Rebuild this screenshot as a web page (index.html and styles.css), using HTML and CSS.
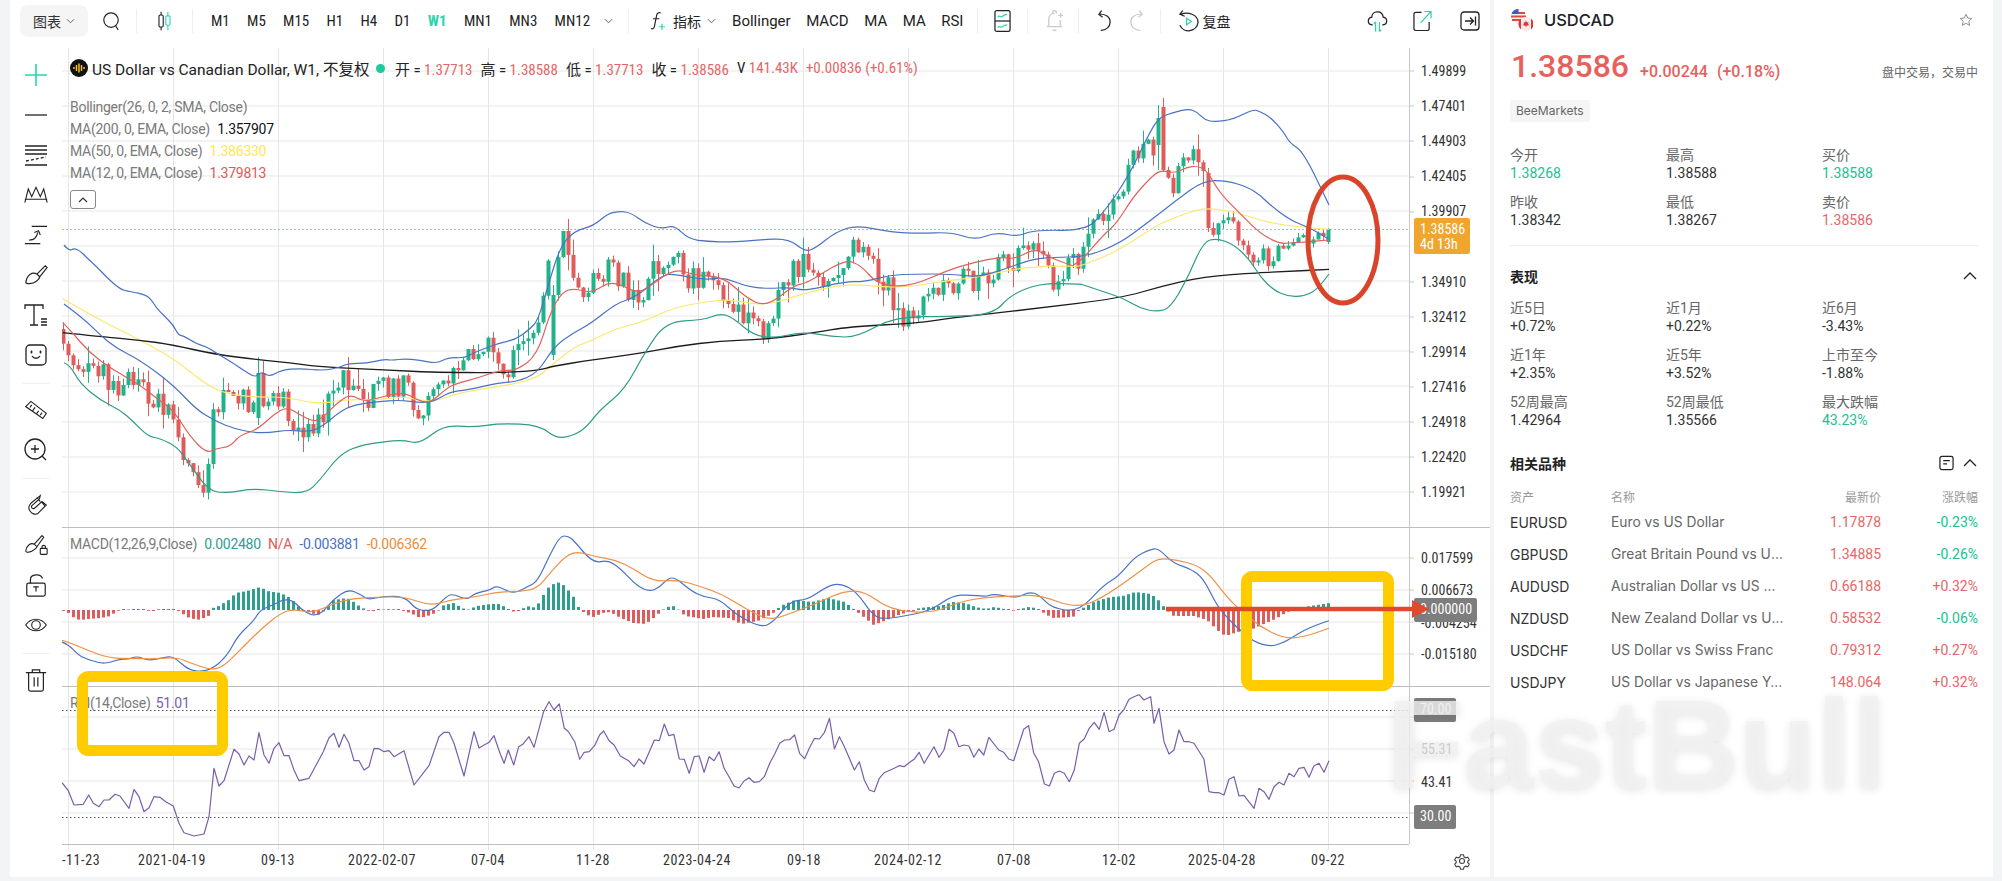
FILE: index.html
```html
<!DOCTYPE html>
<html lang="zh-CN">
<head>
<meta charset="utf-8">
<title>USDCAD</title>
<link rel="stylesheet" href="styles.css">
</head>
<body>
<div class="app">
  <main class="workspace">
    <header class="topbar">
      <button class="menu-btn">图表 <svg class="chev" viewBox="0 0 10 6"><path d="M1 1l4 4 4-4"/></svg></button>
      <svg class="ic ic-search" viewBox="0 0 20 22"><circle cx="10" cy="10" r="8"/><path d="M15 16l3 5"/></svg>
      <i class="sep sep-a"></i>
      <svg class="ic ic-candle" viewBox="0 0 20 24"><path d="M6 1v4M6 19v4"/><rect x="3.5" y="5" width="5" height="14" rx="1.5"/><path class="teal" d="M14 1v5M14 17v6"/><rect class="teal" x="11.5" y="6" width="5" height="11" rx="1.5"/></svg>
      <i class="sep sep-b"></i>
      <nav class="periods">
        <span>M1</span><span>M5</span><span>M15</span><span>H1</span><span>H4</span><span>D1</span><span class="on">W1</span><span>MN1</span><span>MN3</span><span>MN12</span>
      </nav>
      <svg class="chev chev-p" viewBox="0 0 10 6"><path d="M1 1l4 4 4-4"/></svg>
      <i class="sep sep-c"></i>
      <svg class="ic ic-f" viewBox="0 0 18 24"><path d="M12 3c-2.500-1-4 0-4.500 2.500L5 18c-.5 2.500-2 3.500-4 2.500M3.500 9.500h7"/><path class="teal" d="M10 18.500h7M13.500 15v7"/></svg>
      <span class="tb-text tb-ind">指标</span>
      <svg class="chev chev-i" viewBox="0 0 10 6"><path d="M1 1l4 4 4-4"/></svg>
      <nav class="indicators"><span>Bollinger</span><span>MACD</span><span>MA</span><span>MA</span><span>RSI</span></nav>
      <i class="sep sep-d"></i>
      <svg class="ic ic-layout" viewBox="0 0 18 24"><rect x="1" y="1" width="16" height="22" rx="2"/><path d="M1 12h16"/><path class="teal" d="M4 8c2-3 3 1 5-1s3-2 5-2M4 19c2-3 3 1 5-1s3-2 5-2"/></svg>
      <i class="sep sep-e"></i>
      <svg class="ic ic-bell muted" viewBox="0 0 20 24"><path d="M4 18V10c0-3.500 2.500-6 6-6M2 18h16M8 21c1 1.500 3 1.500 4 0M8 4c0-2 1-3 2-3s2 1 2 3M16 18v-7M14 6h5M16.500 3.500v5"/></svg>
      <i class="sep sep-f"></i>
      <svg class="ic ic-undo" viewBox="0 0 16 24"><path d="M5 1L2 5l4 3M2 5c6-1 12 2 12 8 0 5-4 9-10 9"/></svg>
      <svg class="ic ic-redo muted" viewBox="0 0 16 24"><path d="M11 1l3 4-4 3M14 5C8 4 2 7 2 13c0 5 4 9 10 9"/></svg>
      <i class="sep sep-g"></i>
      <svg class="ic ic-replay" viewBox="0 0 22 24"><path d="M5 1L2 5l5 2M3 5c7-3 18 0 18 8.500a10 10 0 0 1-19 3"/><path class="teal" d="M9 9l5 3.500-5 3.500z"/></svg>
      <span class="tb-text tb-replay">复盘</span>
      <span class="grow"></span>
      <svg class="ic ic-cloud" viewBox="0 0 22 24"><path d="M6 16c-6 0-6-7-1-8 0-7 11-8 12 0 5 1 5 8-1 8"/><path class="teal" d="M9 13v10M9 13l-2 2M13 13v10M13 23l2-2"/></svg>
      <svg class="ic ic-share" viewBox="0 0 20 24"><path d="M9 3H3a2 2 0 0 0-2 2v15a2 2 0 0 0 2 2h12a2 2 0 0 0 2-2v-7"/><path class="teal" d="M8 14L19 2M12 2h7v7"/></svg>
      <svg class="ic ic-collapse" viewBox="0 0 20 20"><rect x="1" y="1" width="18" height="18" rx="3"/><path d="M5 10h8M10 6.500l3.500 3.500-3.500 3.500M15.500 5.500v9"/></svg>
    </header>

    <div class="stage">
      <aside class="tools">
        <svg class="tool" viewBox="0 0 24 24"><path class="teal thick" d="M12 1v22M1 12h22"/></svg>
        <svg class="tool" viewBox="0 0 24 24"><path d="M1 12h22"/></svg>
        <svg class="tool" viewBox="0 0 24 24"><path d="M1 3h22M1 7h22M1 11h22M1 22h22"/><path stroke-dasharray="3 2" d="M2 18l20-4"/></svg>
        <svg class="tool" viewBox="0 0 28 24"><path d="M1 21L5 5l4 9 5-11 5 11 4-9 4 16M1 17h26"/></svg>
        <svg class="tool" viewBox="0 0 28 24"><path d="M9 2h18M1 22h18M6 18c6 0 9-3 10-9M12 9l5-2 2 5"/></svg>
        <svg class="tool" viewBox="0 0 26 24"><path d="M14 11L23 2l2 2-8 10M14 11c-5-3-11 1-12 9 0 2 7 2 11-1 3-2 4-4 4-5z"/></svg>
        <svg class="tool" viewBox="0 0 24 24"><path d="M1 6V2h18v4M10 2v20M6 22h8M17 16h6M17 19h6M17 22h6"/></svg>
        <svg class="tool" viewBox="0 0 24 24"><rect x="2" y="2" width="20" height="20" rx="4"/><path d="M8 13c2 3 6 3 8 0"/><path class="dot" d="M7.500 8.500v1M16.500 8.500v1"/></svg>
        <i class="tool-sep"></i>
        <svg class="tool" viewBox="0 0 28 24"><path d="M8 2l18 14-4 6L2 8zM9 6l-2 3M13 9l-3 4M17 13l-2 3M21 15l-2 3"/></svg>
        <svg class="tool" viewBox="0 0 24 24"><circle cx="11" cy="11" r="10"/><path d="M18 18l4 4M11 7v8M7 11h8"/></svg>
        <i class="tool-sep"></i>
        <svg class="tool" viewBox="0 0 28 26"><path d="M19 2L8 11c-3 3-3 6-1 9s6 5 9 3l10-10-5-4-9 8c-2 1-4-1-3-3l9-8zM15 4l4 5M21 10l4 5"/></svg>
        <svg class="tool" viewBox="0 0 28 26"><path d="M12 12l9-10 2 2-8 11M12 12c-4-2-9 1-10 8 0 2 6 2 9-1 3-2 4-3 4-4z"/><rect x="19" y="17" width="8" height="7" rx="1"/><path d="M21 17v-2c0-2 4-2 4 0v2"/></svg>
        <svg class="tool" viewBox="0 0 24 26"><rect x="2" y="11" width="20" height="14" rx="2"/><path d="M6 11V7c0-6 11-7 13-1M9 15h6M12 15v5"/></svg>
        <svg class="tool" viewBox="0 0 28 24"><path d="M2 12c6-9 18-9 24 0-6 9-18 9-24 0z"/><circle cx="14" cy="12" r="5"/></svg>
        <i class="tool-sep"></i>
        <svg class="tool" viewBox="0 0 24 26"><path d="M1 5h22M8 5V2h8v3M4 5v18a2 2 0 0 0 2 2h12a2 2 0 0 0 2-2V5M10 10v10M14 10v10"/></svg>
      </aside>

      <section class="chart">
        <svg id="plot" class="plot" viewBox="62 48 1428 829" width="1428" height="829">
          <g id="grid"></g>
          <g id="candles"></g>
          <g id="lines"></g>
          <g class="axis">
            <text x="1421" y="76">1.49899</text>
            <text x="1421" y="111">1.47401</text>
            <text x="1421" y="146">1.44903</text>
            <text x="1421" y="181">1.42405</text>
            <text x="1421" y="216">1.39907</text>
            <text x="1421" y="287">1.34910</text>
            <text x="1421" y="322">1.32412</text>
            <text x="1421" y="357">1.29914</text>
            <text x="1421" y="392">1.27416</text>
            <text x="1421" y="427">1.24918</text>
            <text x="1421" y="462">1.22420</text>
            <text x="1421" y="497">1.19921</text>
            <text x="1421" y="563">0.017599</text>
            <text x="1421" y="595">0.006673</text>
            <text x="1421" y="628">-0.004254</text>
            <text x="1421" y="659">-0.015180</text>
            <text x="1421" y="754">55.31</text>
            <text x="1421" y="787">43.41</text>
          </g>
          <g class="dates">
            <text x="62" y="865" class="start">-11-23</text>
            <text x="172" y="865">2021-04-19</text>
            <text x="278" y="865">09-13</text>
            <text x="382" y="865">2022-02-07</text>
            <text x="488" y="865">07-04</text>
            <text x="593" y="865">11-28</text>
            <text x="697" y="865">2023-04-24</text>
            <text x="804" y="865">09-18</text>
            <text x="908" y="865">2024-02-12</text>
            <text x="1014" y="865">07-08</text>
            <text x="1119" y="865">12-02</text>
            <text x="1222" y="865">2025-04-28</text>
            <text x="1328" y="865">09-22</text>
          </g>
          <g class="tags">
            <rect class="tag-orange" x="1414" y="218" width="56" height="36" rx="2"/>
            <text x="1420" y="234">1.38586</text>
            <text x="1420" y="249">4d 13h</text>
            <rect class="tag-grey" x="1414" y="598" width="63" height="24" rx="2"/>
            <text x="1420" y="614">0.000000</text>
            <rect class="tag-grey" x="1414" y="698" width="42" height="24" rx="2"/>
            <text x="1420" y="714">70.00</text>
            <rect class="tag-grey" x="1414" y="805" width="42" height="24" rx="2"/>
            <text x="1420" y="821">30.00</text>
          </g>
          <g class="gear" transform="translate(1455 854)">
            <circle cx="7" cy="7" r="2.500"/>
            <path d="M5.500 .8h3l.5 2 1.800 1 2-.6 1.500 2.600-1.500 1.500v1.400l1.500 1.500-1.500 2.600-2-.6-1.800 1-.5 2h-3l-.5-2-1.800-1-2 .6L-.3 10.200 1.200 8.700V7.300L-.3 5.800 1.200 3.200l2 .6 1.800-1z"/>
          </g>
        </svg>

        <div class="legend">
          <div class="legend-title">
            <svg class="brand" viewBox="0 0 18 18"><circle cx="9" cy="9" r="9"/><path d="M4 8v2M6.500 6v6M9 4.500v9M11.500 6v6M14 8v2"/></svg>
            <span class="sym">US Dollar vs Canadian Dollar, W1, 不复权</span>
            <i class="live"></i>
            <span class="ohlc">开 = <b>1.37713</b></span>
            <span class="ohlc">高 = <b>1.38588</b></span>
            <span class="ohlc">低 = <b>1.37713</b></span>
            <span class="ohlc">收 = <b>1.38586</b></span>
            <span class="ohlc">V <b>141.43K</b></span>
            <span class="ohlc"><b>+0.00836 (+0.61%)</b></span>
          </div>
          <div class="study">Bollinger(26, 0, 2, SMA, Close)</div>
          <div class="study">MA(200, 0, EMA, Close) <b class="c-black">1.357907</b></div>
          <div class="study">MA(50, 0, EMA, Close) <b class="c-yellow">1.386330</b></div>
          <div class="study">MA(12, 0, EMA, Close) <b class="c-red">1.379813</b></div>
          <button class="fold"><svg viewBox="0 0 10 6"><path d="M1 5l4-4 4 4"/></svg></button>
        </div>
        <div class="pane-legend pane-macd">MACD(12,26,9,Close) <b class="c-teal">0.002480</b> <b class="c-red">N/A</b> <b class="c-blue">-0.003881</b> <b class="c-orange">-0.006362</b></div>
        <div class="pane-legend pane-rsi">RSI(14,Close) <b class="c-purple">51.01</b></div>

        <svg class="marks" viewBox="62 48 1428 829" width="1428" height="829">
          <rect class="box" x="82.500" y="676.500" width="140" height="74" rx="6"/>
          <rect class="box" x="1246.500" y="576.500" width="142" height="109" rx="6"/>
          <ellipse class="ring" cx="1343" cy="240" rx="35" ry="63"/>
          <path class="arrow-line" d="M1166 609h250"/>
          <path class="arrow-head" d="M1412 600l17 9-17 9z"/>
        </svg>
      </section>
    </div>
  </main>

  <aside class="panel">
    <div class="sym-row">
      <svg class="flag" viewBox="0 0 22 22">
        <circle cx="7.500" cy="7.500" r="7.500" fill="#f4f4f6"/>
        <path d="M1 4h13M0 7.500h15M1 11h13" stroke="#e04a44" stroke-width="1.800"/>
        <path d="M7.500 0a7.500 7.500 0 0 0-7 5h7z" fill="#3f5fb5"/>
        <circle cx="15" cy="15" r="7" fill="#fbeaea"/>
        <path d="M10 9.500a7 7 0 0 0 0 11zM20 9.500a7 7 0 0 1 0 11zM15 11.500l1 2 1.500-.5-.5 2.500 1-.3v1l-2.500.6v1h-1v-1l-2.500-.6v-1l1 .3-.5-2.500 1.500.5z" fill="#dc3a3a"/>
      </svg>
      <span class="sym-name">USDCAD</span>
      <svg class="star" viewBox="0 0 16 16"><path d="M8 1.500l2 4.200 4.600.6-3.400 3.200.9 4.600L8 11.800l-4.100 2.300.9-4.600L1.400 6.300 6 5.700z"/></svg>
    </div>
    <div class="price-row">
      <span class="last">1.38586</span>
      <span class="chg">+0.00244</span>
      <span class="chg">(+0.18%)</span>
      <span class="state">盘中交易，交易中</span>
    </div>
    <span class="broker">BeeMarkets</span>
    <div class="stats stats-a">
      <div><label>今开</label><span class="up">1.38268</span></div>
      <div><label>最高</label><span>1.38588</span></div>
      <div><label>买价</label><span class="up">1.38588</span></div>
      <div><label>昨收</label><span>1.38342</span></div>
      <div><label>最低</label><span>1.38267</span></div>
      <div><label>卖价</label><span class="down">1.38586</span></div>
    </div>
    <hr class="rule">
    <div class="sec-head sec-perf"><h3>表现</h3><svg class="caret" viewBox="0 0 14 8"><path d="M1 7l6-6 6 6"/></svg></div>
    <div class="stats stats-b">
      <div><label>近5日</label><span>+0.72%</span></div>
      <div><label>近1月</label><span>+0.22%</span></div>
      <div><label>近6月</label><span>-3.43%</span></div>
      <div><label>近1年</label><span>+2.35%</span></div>
      <div><label>近5年</label><span>+3.52%</span></div>
      <div><label>上市至今</label><span>-1.88%</span></div>
      <div><label>52周最高</label><span>1.42964</span></div>
      <div><label>52周最低</label><span>1.35566</span></div>
      <div><label>最大跌幅</label><span class="up">43.23%</span></div>
    </div>
    <div class="sec-head sec-rel"><h3>相关品种</h3><svg class="doc" viewBox="0 0 16 16"><rect x="1" y="1" width="14" height="14" rx="2"/><path d="M4.500 5.500h7M4.500 9h4"/></svg><svg class="caret" viewBox="0 0 14 8"><path d="M1 7l6-6 6 6"/></svg></div>
    <div class="table">
      <div class="tr th"><span>资产</span><span>名称</span><span class="r">最新价</span><span class="r">涨跌幅</span></div>
      <div class="tr"><span class="a">EURUSD</span><span class="n">Euro vs US Dollar</span><span class="r down">1.17878</span><span class="r up">-0.23%</span></div>
      <div class="tr"><span class="a">GBPUSD</span><span class="n">Great Britain Pound vs US Dollar</span><span class="r down">1.34885</span><span class="r up">-0.26%</span></div>
      <div class="tr"><span class="a">AUDUSD</span><span class="n">Australian Dollar vs US Dollar</span><span class="r down">0.66188</span><span class="r down">+0.32%</span></div>
      <div class="tr"><span class="a">NZDUSD</span><span class="n">New Zealand Dollar vs US Dollar</span><span class="r down">0.58532</span><span class="r up">-0.06%</span></div>
      <div class="tr"><span class="a">USDCHF</span><span class="n">US Dollar vs Swiss Franc</span><span class="r down">0.79312</span><span class="r down">+0.27%</span></div>
      <div class="tr"><span class="a">USDJPY</span><span class="n">US Dollar vs Japanese Yen</span><span class="r down">148.064</span><span class="r down">+0.32%</span></div>
    </div>
  </aside>
  <div class="watermark">FastBull</div>
</div>
<script src="chart.js"></script>
</body>
</html>
```
FILE: styles.css
```css
* { box-sizing: border-box; }
html, body { margin: 0; height: 100%; }
body {
  background: #f3f4f5;
  color: #222;
  font-family: Roboto, "Noto Sans CJK SC", sans-serif;
  font-stretch: 85%;
  font-size: 14px;
  overflow: hidden;
}
b { font-weight: 400; }
.app { position: relative; display: flex; width: 2002px; height: 881px; padding-left: 10px; align-items: flex-start; }
.workspace { width: 1480px; height: 877px; background: #fff; display: flex; flex-direction: column; }

/* top bar */
.topbar { height: 48px; padding: 5px 10px 11px 10px; display: flex; align-items: center; flex: none; }
.menu-btn {
  width: 68px; height: 32px; border: 0; border-radius: 8px; background: #f5f5f5;
  display: flex; align-items: center; justify-content: center; gap: 5px;
  font: 400 14px "Noto Sans CJK SC", sans-serif; color: #333; padding: 0;
}
.chev { width: 9px; height: 6px; fill: none; stroke: #666; stroke-width: 1.100; flex: none; }
.ic { fill: none; stroke: #222; stroke-width: 1.300; flex: none; height: 24px; }
.ic .teal, .tool .teal { stroke: #2ed3b0; }
.ic.muted { stroke: #c9c9c9; }
.sep { width: 1px; height: 24px; background: #eee; flex: none; }
.ic-search { width: 18px; height: 20px; margin-left: 14px; }
.sep-a { margin-left: 16px; }
.ic-candle { width: 17px; margin-left: 19px; }
.sep-b { margin-left: 19px; }
.periods { display: flex; gap: 17.300px; margin-left: 18px; font-size: 15px; font-stretch: 85%; color: #222; }
.periods .on { color: #2ed3b0; font-weight: 700; }
.chev-p { margin-left: 14px; }
.sep-c { margin-left: 15px; }
.ic-f { width: 16px; margin-left: 21px; }
.tb-text { font: 400 14px "Noto Sans CJK SC", sans-serif; color: #222; }
.tb-ind { margin-left: 7px; }
.chev-i { margin-left: 6px; }
.indicators { display: flex; gap: 15.500px; margin-left: 16px; font-size: 15px; font-stretch: 97%; color: #222; }
.sep-d { margin-left: 14px; }
.ic-layout { width: 17px; margin-left: 16px; }
.sep-e { margin-left: 16px; }
.ic-bell { width: 19px; margin-left: 17px; }
.sep-f { margin-left: 14px; }
.ic-undo { width: 15px; margin-left: 18px; }
.ic-redo { width: 15px; margin-left: 17px; }
.sep-g { margin-left: 16px; }
.ic-replay { width: 21px; margin-left: 17px; }
.tb-replay { margin-left: 3px; }
.grow { flex: 1; }
.ic-cloud { width: 21px; }
.ic-share { width: 19px; margin-left: 25px; }
.ic-collapse { width: 20px; height: 20px; margin-left: 28px; }

/* left tools */
.stage { display: flex; flex: 1; min-height: 0; }
.tools { width: 52px; flex: none; display: flex; flex-direction: column; align-items: center; padding-top: 7px; }
.tool { width: 24px; height: 24px; margin: 8px 0; flex: none; fill: none; stroke: #222; stroke-width: 1.300; }
.tool .thick { stroke-width: 1.600; }
.tool .dot { stroke-width: 1.800; stroke-linecap: round; }
.tool-sep { width: 26px; height: 1px; background: #eee; margin: 8px 0 6px; flex: none; }

/* chart */
.chart { position: relative; flex: 1; height: 829px; overflow: hidden; }
.plot, .marks { position: absolute; left: 0; top: 0; display: block; }
.marks { pointer-events: none; fill: none; }
.axis text, .dates text { font-size: 14px; fill: #333; }
.dates text { text-anchor: middle; letter-spacing: .6px; }
.dates .start { text-anchor: start; }
.tags text { font-size: 14px; fill: #fff; }
.tag-orange { fill: #f0a52d; }
.tag-grey { fill: #7d7d7d; }
.gear { fill: none; stroke: #444; stroke-width: 1.100; }
.legend { position: absolute; left: 8px; top: 9px; font-size: 14px; font-stretch: 89%; letter-spacing: -.27px; color: #7a7a7a; }
.legend-title { display: flex; align-items: center; height: 22px; margin-bottom: 17px; color: #222; font-stretch: 85%; letter-spacing: 0; }
.brand { width: 18px; height: 18px; flex: none; fill: #111; stroke: none; }
.brand path { stroke: #f5bd1f; stroke-width: 1.500; fill: none; }
.sym { margin-left: 4px; width: 279px; font-size: 15.500px; font-stretch: 94%; white-space: nowrap; }
.live { width: 9px; height: 9px; border-radius: 50%; background: #1fc99c; margin: 0 10px 0 5px; flex: none; }
.ohlc { margin-right: 8px; white-space: nowrap; font-size: 15px; }
.ohlc b { color: #e46767; }
.study { height: 22px; line-height: 22px; white-space: nowrap; }
.c-black { color: #111; margin-left: 4px; }
.c-yellow { color: #ffe84d; margin-left: 4px; }
.c-red { color: #e05a56; margin-left: 4px; }
.c-teal { color: #2f9e8f; margin-left: 4px; }
.c-blue { color: #4a72c4; margin-left: 4px; }
.c-orange { color: #ee8c3c; margin-left: 4px; }
.c-purple { color: #7a5ea8; margin-left: 2px; }
.fold { display: block; width: 26px; height: 19px; margin-top: 6px; padding: 0; border: 1px solid #888; border-radius: 3px; background: #fff; }
.fold svg { display: block; width: 10px; height: 6px; margin: auto; fill: none; stroke: #333; stroke-width: 1.200; }
.pane-legend { position: absolute; left: 8px; font-size: 14px; font-stretch: 89%; letter-spacing: -.27px; color: #7a7a7a; white-space: nowrap; line-height: 18px; }
.pane-macd { top: 487px; }
.pane-rsi { top: 646px; }
.box { fill: none; stroke: #ffcc00; stroke-width: 11; }
.ring { fill: none; stroke: #d8452b; stroke-width: 5; }
.arrow-line { stroke: #e04a2c; stroke-width: 4.500; }
.arrow-head { fill: #e04a2c; }

/* right panel */
.panel { width: 499px; height: 877px; margin-left: 4px; padding: 0 15px 0 16px; background: #fff; font-family: Roboto, "Noto Sans CJK SC", sans-serif; font-stretch: 100%; }
.sym-row { height: 40px; display: flex; align-items: center; }
.flag { width: 22px; height: 22px; flex: none; margin-left: 1px; }
.sym-name { margin-left: 11px; font: 500 16.500px Inter, sans-serif; color: #1d2129; flex: 1; }
.star { width: 14px; height: 14px; margin-right: 5px; fill: none; stroke: #8a8a8a; stroke-width: 1.100; }
.price-row { display: flex; align-items: baseline; height: 40px; margin-top: 7px; color: #e8605c; }
.last { font-size: 32px; font-weight: 500; margin-right: 11px; margin-left: 1px; }
.chg { font-size: 16px; font-weight: 500; margin-right: 9px; }
.state { margin-left: auto; margin-right: 0; font: 400 12px "Noto Sans CJK SC", sans-serif; color: #666; }
.broker { display: inline-block; height: 22px; line-height: 22px; margin-top: 13px; padding: 0 6px; border-radius: 3px; background: #f5f5f5; color: #666; font: 400 12px/22px Inter, sans-serif; vertical-align: top; }
.stats { display: grid; grid-template-columns: 156px 156px 156px; row-gap: 11px; }
.stats-a { margin-top: 24px; }
.stats-b { margin-top: 13px; }
.stats label { display: block; height: 18px; line-height: 18px; font-size: 14px; color: #666; }
.stats span { display: block; height: 18px; line-height: 18px; font-size: 14px; color: #333; }
.stats span.up, .up { color: #22bf92; }
.stats span.down, .down { color: #e46767; }
.rule { height: 1px; margin: 16px 0 0; border: 0; background: #eee; }
.sec-head { display: flex; align-items: center; height: 20px; }
.sec-head h3 { margin: 0; flex: 1; font: 700 14px "Noto Sans CJK SC", sans-serif; color: #222; }
.sec-perf { margin-top: 20px; }
.sec-rel { margin-top: 24px; }
.caret { width: 14px; height: 8px; margin-right: 1px; fill: none; stroke: #222; stroke-width: 1.300; }
.doc { width: 15px; height: 16px; margin-right: 9px; fill: none; stroke: #222; stroke-width: 1.300; }
.table { margin-top: 15px; }
.tr { display: grid; grid-template-columns: 101px 174px 96px 97px; height: 32px; align-items: center; font: 400 14px Inter, sans-serif; }
.tr.th { height: 16px; margin-bottom: 2px; font: 400 12px "Noto Sans CJK SC", sans-serif; color: #999; }
.tr .a { color: #333; }
.tr .n { color: #666; font-size: 13.800px; white-space: nowrap; overflow: hidden; text-overflow: ellipsis; }
.tr .r { text-align: right; font-family: Roboto, sans-serif; }

/* watermark */
.watermark {
  position: absolute; left: 1386px; top: 674px; z-index: 5; pointer-events: none;
  font: 700 127px/140px "Liberation Sans", sans-serif;
  color: rgba(241, 241, 241, .8);
  text-shadow: 0 2px 10px rgba(0, 0, 0, .1);
}
```
FILE: chart.js
```js
(function () {
  var T = {
    z5: function (x, y) { return [x / 3, y / 3 + 220]; },
    z9: function (x, y) { return [500 + x / 2.41, 200 + y / 3]; },
    z12: function (x, y) { return [1060 + x / 3, 90 + y / 3]; },
    z7: function (x, y) { return [1150 + x / 3, 80 + y / 3]; },
    z6: function (x, y) { return [x / 3, 510 + y / 3]; },
    z10: function (x, y) { return [500 + x / 2.41, 500 + y / 3]; },
    z8: function (x, y) { return [1150 + x / 3, 530 + y / 3]; }
  };
  function merge(segs) {
    var out = [];
    segs.forEach(function (s) {
      var f = T[s[0]], a = s[1];
      for (var i = 0; i < a.length; i += 2) {
        var p = f(a[i], a[i + 1]);
        if (!out.length || p[0] > out[out.length - 1][0] + 0.5) out.push(p);
      }
    });
    return out;
  }
  function smooth(p) {
    var d = 'M' + p[0][0].toFixed(1) + ' ' + p[0][1].toFixed(1);
    for (var i = 1; i < p.length - 1; i++) {
      var mx = (p[i][0] + p[i + 1][0]) / 2, my = (p[i][1] + p[i + 1][1]) / 2;
      d += 'Q' + p[i][0].toFixed(1) + ' ' + p[i][1].toFixed(1) + ' ' + mx.toFixed(1) + ' ' + my.toFixed(1);
    }
    var l = p[p.length - 1];
    return d + 'L' + l[0].toFixed(1) + ' ' + l[1].toFixed(1);
  }
  function poly(p) {
    return 'M' + p.map(function (q) { return q[0].toFixed(1) + ' ' + q[1].toFixed(1); }).join('L');
  }
  function line(d, color, w) {
    return '<path d="' + d + '" fill="none" stroke="' + color + '" stroke-width="' + (w || 1.2) + '" stroke-linejoin="round"/>';
  }
  function interp(p, x) {
    if (x <= p[0][0]) return p[0][1];
    for (var i = 1; i < p.length; i++) {
      if (x <= p[i][0]) {
        var t = (x - p[i - 1][0]) / (p[i][0] - p[i - 1][0]);
        return p[i - 1][1] + t * (p[i][1] - p[i - 1][1]);
      }
    }
    return p[p.length - 1][1];
  }

  /* ---------- grid ---------- */
  var g = '';
  var i, x, y;
  for (y = 71; y < 510; y += 35.05) g += '<path d="M62 ' + y.toFixed(0) + 'H1409" stroke="#f3f3f3" stroke-width="2"/>';
  [558, 590, 622, 654, 717, 749, 781, 813].forEach(function (v) {
    g += '<path d="M62 ' + v + 'H1409" stroke="#efefef" stroke-width="1.500"/>';
  });
  for (i = 0; i < 13; i++) {
    x = 68 + 105 * i;
    g += '<path d="M' + x + '.5 48V850" stroke="#e6e6e9"/>';
  }
  [71, 106, 141, 177, 212, 282, 317, 352, 387, 422, 457, 492, 558, 590, 622, 654, 717, 749, 781, 813].forEach(function (v) {
    g += '<path d="M1409 ' + v + 'h5" stroke="#c9c9c9"/>';
  });
  g += '<path d="M1409.500 48V844" stroke="#c9c9c9"/>';
  g += '<path d="M62 527.500H1490M62 686.500H1490M62 844.500H1409" stroke="#bdbdbd"/>';
  g += '<path d="M62 229.500H1409" stroke="#eeb04a" stroke-dasharray="2 2"/>';
  g += '<path d="M62 710.500H1409M62 817.500H1409" stroke="#555" stroke-dasharray="1.500 2.500"/>';
  document.getElementById('grid').innerHTML = g;

  /* ---------- series ---------- */
  var upper = merge([
    ['z5', [192,75,207,93,222,85,240,92,262,115,290,140,320,172,360,208,390,215,445,225,470,265,490,285,520,315,535,345,550,347,590,372,620,380,650,400,700,430,730,450,765,472,775,460,790,458,810,470,845,450,900,445,970,452,1020,442,1045,430,1100,430,1150,418,1180,421,1210,416,1260,420,1310,431,1345,412,1395,414,1420,398,1500,368]],
    ['z9', [35,420,70,390,92,360,115,260,145,140,180,92,225,78,260,40,290,34,315,38,350,70,390,87,420,75,455,118,500,124,560,127,620,120,695,115,735,155,760,145,810,95,860,76,945,97,1010,100,1090,97,1145,120,1195,97,1250,110,1285,90,1410,92]],
    ['z12', [70,423,130,370,205,260,270,125,300,80,340,68,385,56,410,65,435,90,465,96,520,88,580,58,600,65]],
    ['z7', [360,110,400,155,420,190,460,215,537,375]]
  ]);
  var mid = merge([
    ['z5', [192,252,250,295,300,345,350,385,420,420,520,495,590,570,650,605,700,625,760,638,810,638,860,630,930,635,965,620,1020,575,1060,555,1130,545,1200,540,1260,548,1300,545,1350,515,1400,510,1500,488]],
    ['z9', [40,545,90,520,130,440,175,400,220,370,280,310,330,290,390,225,420,222,490,240,540,232,590,258,640,266,700,262,735,273,830,245,880,245,940,225,1000,222,1090,222,1150,232,1210,210,1280,178,1330,172]],
    ['z12', [80,500,180,460,260,400,350,330,430,272,500,272,560,290,600,315]],
    ['z7', [360,375,420,420,470,440,500,455,537,478]]
  ]);
  var yellow = merge([
    ['z5', [188,236,300,300,420,360,520,415,620,495,680,522,770,532,860,530,950,553,1040,538,1130,540,1210,530,1260,540,1300,545,1390,515,1500,500]],
    ['z9', [90,535,130,490,180,440,220,422,280,385,340,368,420,322,500,305,550,298,640,318,720,285,830,250,940,262,1000,258,1090,240,1150,232,1210,215,1280,200,1380,198]],
    ['z12', [60,530,180,480,290,405,340,385,430,352,520,365,600,390]],
    ['z7', [300,410,370,430,440,440,537,448]]
  ]);
  var red = merge([
    ['z5', [188,307,215,335,270,400,340,450,420,495,470,535,520,570,570,650,620,700,650,685,690,680,720,645,770,630,820,585,860,560,900,585,940,605,965,595,1010,550,1050,522,1090,545,1130,535,1210,515,1250,540,1290,550,1340,505,1370,490,1430,475,1500,450]],
    ['z9', [40,512,90,465,120,340,150,275,180,265,220,280,270,240,330,280,360,260,420,205,470,225,540,232,590,290,640,322,710,255,740,250,830,178,870,195,910,255,990,260,1080,210,1140,188,1210,170,1240,178,1290,145,1320,170,1380,198]],
    ['z12', [40,525,70,505,130,435,170,400,220,320,270,265,300,240,345,250,380,232,410,228,440,240,480,310,540,370,600,430]],
    ['z7', [320,450,385,490,420,490,470,485,537,480]]
  ]);
  var lower = merge([
    ['z5', [192,428,210,435,240,490,300,540,360,570,400,605,445,650,480,655,530,680,560,720,625,812,680,820,760,805,840,815,920,820,960,780,1015,708,1070,678,1150,665,1210,660,1260,672,1330,615,1420,622,1500,610]],
    ['z9', [95,675,140,720,200,695,240,630,300,570,350,455,400,365,490,360,530,340,560,352,610,405,660,415,730,395,800,410,860,412,950,350,1090,350,1190,342,1230,285,1300,250,1400,252]],
    ['z12', [70,585,130,605,190,625,240,655,290,665,330,655,380,570,430,455,470,445,520,462,570,510,600,560]],
    ['z7', [330,590,370,630,410,648,460,650,500,630,537,582]]
  ]);
  var black = merge([
    ['z5', [188,338,300,350,420,360,520,375,640,402,780,420,870,428,950,440,1100,447,1200,452,1300,457,1500,458]],
    ['z9', [90,512,130,498,220,480,340,460,430,438,530,423,640,418,760,398,840,380,1000,370,1100,352,1180,342,1290,325]],
    ['z12', [180,625,300,590,430,560,600,548]],
    ['z7', [400,575,537,568]]
  ]);

  /* ---------- candles ---------- */
  var anchors = [[63,335],[73,365],[88,375],[100,375],[115,385],[130,385],[150,395],[165,405],[175,420],[183,460],[190,470],[200,485],[208,475],[213,420],[225,385],[240,395],[255,405],[265,415],[275,395],[285,405],[295,425],[305,435],[320,420],[335,385],[345,380],[355,400],[370,395],[395,385],[405,385],[420,410],[435,390],[450,375],[470,355],[480,345],[490,350],[500,372],[510,365],[520,350],[535,330],[545,280],[555,250],[562,240],[570,270],[580,290],[590,285],[600,265],[610,265],[625,285],[640,295],[655,270],[665,255],[680,265],[690,280],[700,275],[715,280],[730,305],[745,320],[760,330],[770,325],[780,290],[795,265],[810,268],[825,275],[840,265],[850,250],[860,245],[875,265],[890,290],[900,320],[912,320],[925,290],[945,285],[970,280],[990,275],[1010,262],[1019,250],[1033,235],[1043,265],[1052,280],[1068,270],[1079,262],[1089,230],[1103,210],[1118,200],[1128,163],[1138,153],[1148,147],[1158,140],[1163,127],[1168,170],[1173,183],[1178,160],[1183,153],[1198,165],[1203,175],[1208,203],[1213,230],[1223,232],[1228,227],[1233,220],[1238,230],[1243,245],[1248,252],[1253,260],[1258,257],[1263,250],[1268,267],[1273,260],[1278,248],[1283,250],[1288,245],[1293,243],[1298,239],[1303,237],[1308,242],[1313,240],[1318,235],[1323,237],[1328,235]];
  var overrides = {
    39: [418, 373, 357, 425], 98: [355, 295, 285, 360],
    219: [145, 118, 105, 170], 220: [107, 170, 98, 172], 229: [173, 228, 168, 232],
    253: [242, 229, 228, 244]
  };
  var seed = 20210419;
  function rnd() { seed = (seed * 1664525 + 1013904223) % 4294967296; return seed / 4294967296; }
  var GREEN = '#20b389', RED = '#de5d5a';
  var c = '', prev = interp(anchors, 63) - 6;
  for (i = 0; i <= 253; i++) {
    x = 63 + 5 * i;
    var o, cl, hi, lo, ov = overrides[i];
    if (ov) { o = ov[0]; cl = ov[1]; hi = ov[2]; lo = ov[3]; }
    else {
      o = prev;
      var amp = i > 235 ? 8 : 26;
      cl = interp(anchors, x) + (rnd() - 0.5) * amp;
      if (Math.abs(cl - o) < 2) cl = o + (rnd() < 0.5 ? -3 : 3);
      var big = rnd() < 0.3 ? 18 : 7;
      if (i > 235) big = 5;
      hi = Math.min(o, cl) - rnd() * big;
      lo = Math.max(o, cl) + rnd() * big;
    }
    prev = cl;
    var col = cl < o ? GREEN : RED;
    c += '<path d="M' + x + '.5 ' + hi.toFixed(1) + 'V' + lo.toFixed(1) + '" stroke="' + col + '"/>';
    c += '<rect x="' + (x - 1.5) + '" y="' + Math.min(o, cl).toFixed(1) + '" width="4" height="' + Math.abs(cl - o).toFixed(1) + '" fill="' + col + '"/>';
  }
  document.getElementById('candles').innerHTML = c;

  /* ---------- MACD ---------- */
  var hist = [];
  function addHist(f, a) {
    for (var k = 0; k < a.length; k += 2) {
      var px = f(a[k], 0)[0];
      if (!hist.length || px > hist[hist.length - 1][0] + 0.5) hist.push([px, a[k + 1]]);
    }
  }
  addHist(T.z6, [190,-1,205,-3,225,-9,240,-10,265,-9,300,-8,330,-6,345,-2,360,0,400,1,420,1,440,-1,480,1,520,1,540,-2,560,-7,590,-10,610,-8,630,-5,640,3,655,4,670,7,690,11,705,17,740,19,780,23,800,19,840,17,870,12,890,5,905,0,925,-2,950,-5,965,-3,985,5,1000,10,1020,11,1040,12,1060,8,1080,3,1100,0,1110,-2,1130,0,1170,1,1200,0,1230,-3,1260,-8,1290,-5,1310,-2,1330,5,1360,7,1385,2,1400,0,1430,4,1470,6,1500,6]);
  addHist(T.z10, [20,0,35,-2,50,1,70,4,85,2,105,16,120,25,145,28,165,19,180,11,190,1,210,-5,225,-7,245,-3,265,-2,290,-8,320,-13,350,-14,375,-6,385,-2,400,3,420,4,430,0,445,-6,490,-9,510,-7,550,-8,580,-14,620,-11,655,-4,675,4,710,10,750,8,790,12,830,8,845,3,860,-2,900,-15,930,-10,960,-5,990,-1,1010,2,1060,4,1090,8,1120,7,1145,3,1170,1,1190,3,1215,1,1240,-1,1270,3,1290,2,1310,-3,1330,-8,1380,-7,1395,0,1430,8,1470,13,1500,14,1530,18,1568,16]);
  addHist(T.z8, [30,8,45,1,70,-6,130,-6,170,-10,200,-20,225,-26,260,-22,300,-20,340,-14,380,-8,410,-2,440,0,460,3,500,5,537,7]);
  var h = '';
  for (i = 0; i <= 253; i++) {
    x = 63 + 5 * i;
    var v = interp(hist, x);
    if (Math.abs(v) < 0.4) v = v < 0 ? -1 : 1;
    h += '<rect x="' + (x - 1) + '" y="' + (v > 0 ? 610 - v : 610).toFixed(1) + '" width="3" height="' + Math.abs(v).toFixed(1) + '" fill="' + (v > 0 ? '#2f9e8f' : '#dd5c5c') + '"/>';
  }

  var macd = merge([
    ['z6', [186,396,205,403,235,435,255,445,300,460,330,458,360,447,385,448,410,438,445,452,490,443,520,438,570,485,630,482,680,440,715,375,760,335,780,300,820,285,850,268,880,272,900,295,935,317,965,310,1000,268,1045,238,1080,252,1105,270,1150,258,1215,260,1245,295,1270,302,1300,300,1340,258,1360,252,1400,270,1425,250,1470,240,1485,230,1500,232]],
    ['z10', [35,282,70,257,90,245,120,165,145,108,165,108,180,125,225,190,260,180,290,205,330,258,360,275,385,262,400,240,420,230,460,272,490,290,530,298,570,345,630,383,660,365,700,302,740,300,790,258,820,250,860,275,900,350,930,357,990,345,1040,330,1090,287,1130,284,1170,290,1190,281,1245,295,1275,275,1300,285,1330,325,1395,335,1455,255,1490,230,1530,170,1568,148]],
    ['z8', [25,55,70,100,120,115,160,145,200,225,230,262,270,300,310,335,360,350,400,338,430,320,460,302,500,285,537,272]]
  ]);
  var signal = merge([
    ['z6', [186,391,210,398,260,420,330,445,400,445,460,447,530,442,570,458,630,480,670,470,720,420,780,360,840,310,880,297,940,310,1000,280,1060,265,1130,262,1215,260,1290,288,1350,270,1420,262,1500,245]],
    ['z10', [50,275,90,265,120,220,160,165,190,155,230,170,280,180,320,205,370,245,430,240,480,258,540,285,590,325,650,362,700,340,760,312,830,272,880,275,940,330,1040,340,1110,305,1170,292,1240,288,1300,285,1390,325,1450,295,1520,235,1568,190]],
    ['z8', [30,85,80,90,140,105,180,135,230,200,270,240,330,290,400,325,460,322,537,295]]
  ]);
  var rsi = merge([
    ['z6', [186,818,205,842,222,885,250,883,266,855,280,880,297,890,312,870,327,870,345,853,360,858,387,895,402,838,417,860,432,905,447,893,462,860,480,862,497,875,520,888,537,940,552,968,582,978,612,972,627,920,642,775,657,828,672,812,702,718,717,732,732,765,747,738,762,750,777,668,792,735,807,760,822,715,837,698,852,737,867,737,882,780,897,812,927,805,970,725,987,683,1002,670,1017,712,1032,673,1047,700,1062,752,1077,752,1092,780,1107,770,1122,715,1137,716,1152,725,1167,722,1182,740,1212,722,1242,825,1287,767,1317,680,1332,667,1347,667,1362,700,1392,798,1422,665,1437,714,1467,697,1482,677,1500,730]],
    ['z10', [10,790,20,750,33,795,45,740,55,733,70,710,82,742,105,635,118,605,130,630,143,612,155,685,165,695,180,725,192,778,203,757,215,755,228,737,240,705,250,693,263,722,275,735,290,768,310,782,323,800,335,777,347,792,372,720,384,722,396,672,407,707,419,703,432,777,444,778,456,820,468,770,480,768,492,817,504,770,516,782,528,755,540,805,552,830,564,858,576,864,588,843,600,833,612,847,625,845,637,830,650,790,662,762,674,730,686,720,698,719,710,705,722,760,734,776,746,743,758,715,770,717,782,697,794,655,806,747,818,710,830,740,854,810,866,785,878,840,890,870,902,875,914,835,926,818,950,805,962,797,974,800,986,788,998,778,1010,757,1022,790,1046,740,1058,772,1070,750,1082,688,1094,700,1106,740,1118,735,1130,738,1142,772,1154,747,1166,765,1178,712,1202,750,1214,757,1226,777,1238,782,1262,688,1274,677,1286,758,1298,785,1312,852,1324,858,1336,820,1348,813,1360,820,1372,845,1384,810,1396,730,1408,717,1420,685,1432,667,1444,688,1456,637,1468,695,1480,688,1492,645,1504,628,1516,598,1528,590,1540,584,1552,600,1568,590]],
    ['z8', [12,580,27,535,42,635,57,672,72,660,87,600,102,635,117,635,132,640,162,688,177,785,192,788,207,788,222,795,237,748,252,740,267,798,282,796,312,835,327,775,342,785,357,808,372,770,387,757,402,765,417,730,432,740,447,715,462,712,477,742,492,707,507,700,522,727,537,692]]
  ]);

  document.getElementById('lines').innerHTML =
    line(smooth(yellow), '#fbe870') +
    line(smooth(black), '#1c1c1c', 1.3) +
    line(smooth(lower), '#2e9c86') +
    line(smooth(mid), '#4a72c4') +
    line(smooth(upper), '#4a72c4') +
    line(smooth(red), '#e0605a') +
    h +
    line(smooth(macd), '#4a72c4') +
    line(smooth(signal), '#ee9147') +
    line(poly(rsi), '#7a5ea8');
})();
```
